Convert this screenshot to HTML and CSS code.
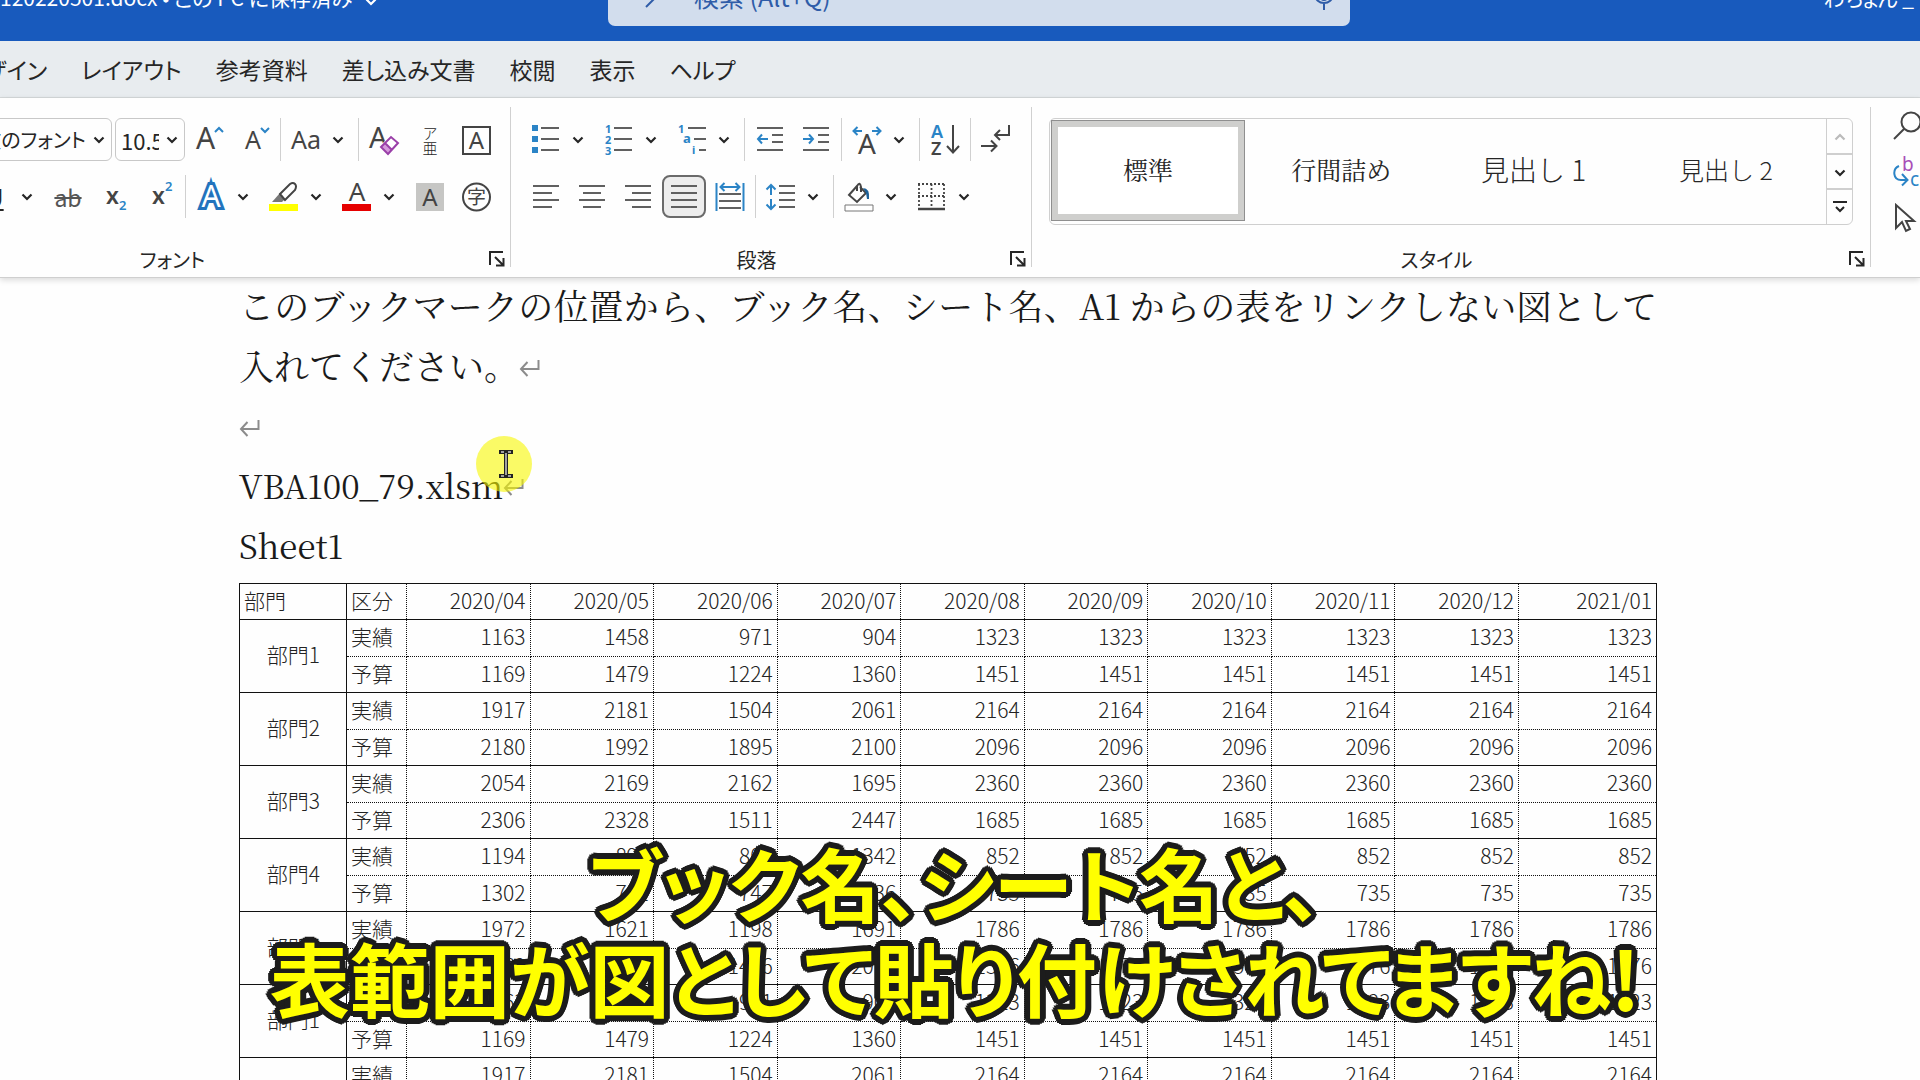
FILE: index.html
```html
<!DOCTYPE html>
<html lang="ja">
  <head>
    <meta charset="UTF-8" />
    <meta name="viewport" content="width=device-width, initial-scale=1.0" />
    <title>120220501.docx</title>
    <link rel="stylesheet" href="styles.css">
  </head>
  <body>
    <!-- shared icons -->
    <svg class="sprite" width="0" height="0" aria-hidden="true">
      <symbol id="chevron" viewBox="0 0 12 8"><path d="M1.5 1.5 6 6l4.5-4.5" fill="none" stroke="currentColor" stroke-width="2.2" /></symbol>
      <symbol id="launcher" viewBox="0 0 16 16"><path d="M1 14V1h13M6 6l8 8M14.500 7v7.500H7" fill="none" stroke="currentColor" stroke-width="2" /></symbol>
      <symbol id="return" viewBox="0 0 22 18"><path d="M19.500 1v9H2M8.500 3 2 10l6.500 7" fill="none" stroke="currentColor" stroke-width="2" /></symbol>
    </svg>

    <div class="app">
      <header class="titlebar">
        <div class="doc-name">120220501.docx • この PC に保存済み <svg class="chevron"><use href="#chevron" /></svg></div>
        <div class="search">
          <svg width="30" height="30" viewBox="0 0 30 30"><circle cx="18" cy="10" r="8" /><path d="M12 16 2 26" /></svg>
          <input type="text" aria-label="検索" placeholder="検索 (Alt+Q)" />
          <svg width="20" height="32" viewBox="0 0 20 32"><rect x="6" y="2" width="8" height="18" rx="4" /><path d="M1 14c0 12 18 12 18 0M10 23v7" /></svg>
        </div>
        <div class="user">わちょん _</div>
      </header>

      <nav class="tabs">
        <a href="#">デザイン</a>
        <a href="#">レイアウト</a>
        <a href="#">参考資料</a>
        <a href="#">差し込み文書</a>
        <a href="#">校閲</a>
        <a href="#">表示</a>
        <a href="#">ヘルプ</a>
      </nav>

      <div class="ribbon">
        <section class="group font-group">
          <div class="tools">
            <div class="row">
              <div class="combo font-name">
                <select aria-label="フォント名"><option>游明朝 (本文のフォント</option></select>
                <svg class="chevron"><use href="#chevron" /></svg>
              </div>
              <div class="combo font-size">
                <input type="text" aria-label="フォント サイズ" value="10.5" />
                <svg class="chevron"><use href="#chevron" /></svg>
              </div>
              <button class="tool" aria-label="フォントの拡大"><svg class="icon" viewBox="0 0 30 30"><text x="2" y="24" font-size="30">A</text><path class="blue" d="m21 7 4-4 4 4" /></svg></button>
              <button class="tool" aria-label="フォントの縮小"><svg class="icon" viewBox="0 0 30 30"><text x="5" y="24" font-size="25">A</text><path class="blue" d="m21 3 4 4 4-4" /></svg></button>
              <span class="sep"></span>
              <button class="tool" aria-label="文字種の変換"><svg class="icon" viewBox="0 0 30 30"><text x="0" y="24" font-size="25">Aa</text></svg></button>
              <button class="drop" aria-label="文字種の変換の一覧"><svg class="chevron"><use href="#chevron" /></svg></button>
              <span class="sep"></span>
              <button class="tool" aria-label="書式のクリア"><svg class="icon" viewBox="0 0 30 30"><text x="0" y="23" font-size="29">A</text><path d="m12 22 10-10 7 7-10 10z" fill="#fff" stroke="#fff" stroke-width="3" /><path d="m12 22 4-4 7 7-4 4z" fill="#d59bdc" /><path d="m12 22 10-10 7 6-10 11zM16 18l7 7" fill="none" stroke="#9a3fa8" stroke-width="2" /></svg></button>
              <button class="tool ruby" aria-label="ルビ"><span>ア</span><span>亜</span></button>
              <button class="tool" aria-label="囲み線"><svg class="icon" viewBox="0 0 30 30"><rect class="dark" x="2" y="2" width="27" height="27" /><text x="15.500" y="24" font-size="24" text-anchor="middle">A</text></svg></button>
            </div>
            <div class="row">
              <button class="tool underline" aria-label="下線">U</button>
              <button class="drop" aria-label="下線の一覧"><svg class="chevron"><use href="#chevron" /></svg></button>
              <button class="tool strike" aria-label="取り消し線">ab</button>
              <button class="tool" aria-label="下付き"><svg class="icon" viewBox="0 0 30 30"><text x="7" y="22" font-size="23" font-weight="600">x</text><text class="blue-text" x="20" y="28" font-size="13" font-weight="600">2</text></svg></button>
              <button class="tool" aria-label="上付き"><svg class="icon" viewBox="0 0 30 30"><text x="7" y="22" font-size="23" font-weight="600">x</text><text class="blue-text" x="20" y="9" font-size="13" font-weight="600">2</text></svg></button>
              <span class="sep"></span>
              <button class="tool" aria-label="文字の効果"><svg class="icon" viewBox="0 0 30 30"><text class="effect" x="15" y="25" font-size="30" text-anchor="middle">A</text></svg></button>
              <button class="drop" aria-label="文字の効果の一覧"><svg class="chevron"><use href="#chevron" /></svg></button>
              <button class="tool" aria-label="蛍光ペン"><svg class="icon" viewBox="0 0 30 30"><path d="M3 20 11 11l6 5-4 4z" fill="#777" /><path d="m11 12 10-10q3-2 5 0t0 6L16 18z" fill="#fff" stroke="#444" stroke-width="2" /><path d="M0 22h29v7H0z" fill="#ff0" /></svg></button>
              <button class="drop" aria-label="蛍光ペンの色"><svg class="chevron"><use href="#chevron" /></svg></button>
              <button class="tool" aria-label="フォントの色"><svg class="icon" viewBox="0 0 30 30"><text x="15" y="19" font-size="26" text-anchor="middle">A</text><path d="M0 22h29v7H0z" fill="#e60000" /></svg></button>
              <button class="drop" aria-label="フォントの色の一覧"><svg class="chevron"><use href="#chevron" /></svg></button>
              <button class="tool" aria-label="文字の網かけ"><svg class="icon" viewBox="0 0 30 30"><path d="M1 1h28v28H1z" fill="#c6c6c4" /><text x="15" y="24" font-size="24" text-anchor="middle">A</text></svg></button>
              <button class="tool" aria-label="囲い文字"><svg class="icon" viewBox="0 0 30 30"><circle class="dark" cx="15.500" cy="15" r="13.500" /><text x="15.500" y="22" font-size="19" text-anchor="middle">字</text></svg></button>
            </div>
          </div>
          <footer class="group-foot">
            <span>フォント</span>
            <button aria-label="フォントの詳細"><svg width="16" height="16"><use href="#launcher" /></svg></button>
          </footer>
        </section>

        <section class="group para-group">
          <div class="tools">
            <div class="row">
              <button class="tool" aria-label="箇条書き"><svg class="icon" viewBox="0 0 30 30"><path d="M1 0h6v6H1zM1 11h6v6H1zM1 22h6v6H1z" fill="#2b84c6" /><path class="lines" d="M10 3h18M10 14h18M10 25h18" /></svg></button>
              <button class="drop" aria-label="行頭文字"><svg class="chevron"><use href="#chevron" /></svg></button>
              <button class="tool" aria-label="段落番号"><svg class="icon" viewBox="0 0 30 30"><g class="blue-text" font-size="11" font-weight="700"><text x="1" y="8">1</text><text x="1" y="19">2</text><text x="1" y="30">3</text></g><path class="lines" d="M10 3h18M10 14h18M10 25h18" /></svg></button>
              <button class="drop" aria-label="番号の書式"><svg class="chevron"><use href="#chevron" /></svg></button>
              <button class="tool" aria-label="アウトライン"><svg class="icon" viewBox="0 0 30 30"><g class="blue-text" font-size="11" font-weight="700"><text x="1" y="8">1</text><text x="6" y="18" font-size="13">a</text><text x="15" y="29">i</text></g><path class="lines" d="M11 3h18M17 14h12M22 25h7" /></svg></button>
              <button class="drop" aria-label="アウトラインの一覧"><svg class="chevron"><use href="#chevron" /></svg></button>
              <span class="sep"></span>
              <button class="tool" aria-label="インデントを減らす"><svg class="icon" viewBox="0 0 30 30"><path class="lines" d="M2 3h26M17 10h11M17 17h11M2 25h26" /><path class="blue" d="M13 14H3M7 9.500 3 14l4 4.500" /></svg></button>
              <button class="tool" aria-label="インデントを増やす"><svg class="icon" viewBox="0 0 30 30"><path class="lines" d="M2 3h26M17 10h11M17 17h11M2 25h26" /><path class="blue" d="M2 14h10M8 9.500l4 4.500-4 4.500" /></svg></button>
              <span class="sep"></span>
              <button class="tool" aria-label="拡張書式"><svg class="icon" viewBox="0 0 30 30"><path class="blue" d="M10 6H2M5.500 2 1.500 6l4 4M20 6h8M24.500 2l4 4-4 4" /><text x="15" y="29" font-size="28" text-anchor="middle">A</text></svg></button>
              <button class="drop" aria-label="拡張書式の一覧"><svg class="chevron"><use href="#chevron" /></svg></button>
              <span class="sep"></span>
              <button class="tool" aria-label="並べ替え"><svg class="icon" viewBox="0 0 30 30"><text class="blue-text" x="1" y="13" font-size="18" font-weight="600">A</text><text x="1" y="30" font-size="18" font-weight="600">Z</text><path class="dark" d="M23 0v27M17 21l6 6.500 6-6.500" /></svg></button>
              <span class="sep"></span>
              <button class="tool" aria-label="編集記号の表示"><svg class="icon" viewBox="0 0 30 30"><path class="dark" d="M28 0v10H14M19 5l-5 5 5 5M0 21h15M10 15.500l5.500 5.500-5.500 5.500" /></svg></button>
            </div>
            <div class="row">
              <button class="tool" aria-label="左揃え"><svg class="icon" viewBox="0 0 30 30"><path class="lines" d="M2 4h26M2 11h19M2 18h26M2 25h19" /></svg></button>
              <button class="tool" aria-label="中央揃え"><svg class="icon" viewBox="0 0 30 30"><path class="lines" d="M2 4h26M6 11h18M2 18h26M6 25h18" /></svg></button>
              <button class="tool" aria-label="右揃え"><svg class="icon" viewBox="0 0 30 30"><path class="lines" d="M2 4h26M9 11h19M2 18h26M9 25h19" /></svg></button>
              <button class="tool active" aria-label="両端揃え"><svg class="icon" viewBox="0 0 30 30"><path class="lines" d="M2 4h26M2 11h26M2 18h26M2 25h26" /></svg></button>
              <button class="tool" aria-label="均等割り付け"><svg class="icon" viewBox="0 0 30 30"><path class="lines" d="M4 12h22M4 19h22M4 26h22" /><path class="blue" d="M1.500 1v28M28.500 1v28M5 5h20M9.500 1 5.500 5l4 4M20.500 1l4 4-4 4" /></svg></button>
              <span class="sep"></span>
              <button class="tool" aria-label="行と段落の間隔"><svg class="icon" viewBox="0 0 30 30"><path class="blue" d="M5 13V3M.5 7.500 5 3l4.500 4.500M5 17v10M.5 22.500 5 27l4.500-4.500" /><path class="lines" d="M13 4h16M13 11h16M13 18h16M13 25h16" /></svg></button>
              <button class="drop" aria-label="間隔の一覧"><svg class="chevron"><use href="#chevron" /></svg></button>
              <span class="sep"></span>
              <button class="tool" aria-label="塗りつぶし"><svg class="icon" viewBox="0 0 30 30"><path class="dark" d="m13 4-8 9 8 7 9-9-6-6M13 9V4q3-5 4 1v5" /><path d="M19 6q7 0 6 11h-2l-1-6z" fill="#1c6199" /><path d="M1 23h28v6H1z" fill="#fff" stroke="#777" /></svg></button>
              <button class="drop" aria-label="塗りつぶしの色"><svg class="chevron"><use href="#chevron" /></svg></button>
              <button class="tool" aria-label="罫線"><svg class="icon" viewBox="0 0 30 30"><path d="M1 2h27M1 14h27M2 2v24M14.500 2v24M27 2v24" fill="none" stroke="#444" stroke-width="1.800" stroke-dasharray="2 2" /><path d="M1 27h27" stroke="#444" stroke-width="2.500" /></svg></button>
              <button class="drop" aria-label="罫線の一覧"><svg class="chevron"><use href="#chevron" /></svg></button>
            </div>
          </div>
          <footer class="group-foot">
            <span>段落</span>
            <button aria-label="段落の設定"><svg width="16" height="16"><use href="#launcher" /></svg></button>
          </footer>
        </section>

        <section class="group style-group">
          <div class="tools">
            <div class="gallery">
              <button class="style selected">標準</button>
              <button class="style">行間詰め</button>
              <button class="style heading1">見出し 1</button>
              <button class="style heading2">見出し 2</button>
              <div class="scroll">
                <button class="disabled" aria-label="上へ"><svg class="chevron up"><use href="#chevron" /></svg></button>
                <button aria-label="下へ"><svg class="chevron"><use href="#chevron" /></svg></button>
                <button aria-label="その他"><svg width="14" height="14" viewBox="0 0 14 14"><path d="M0 2h14M3 7l4 4 4-4" fill="none" stroke="currentColor" stroke-width="2" /></svg></button>
              </div>
            </div>
          </div>
          <footer class="group-foot">
            <span>スタイル</span>
            <button aria-label="スタイルの設定"><svg width="16" height="16"><use href="#launcher" /></svg></button>
          </footer>
        </section>

        <section class="group edit-group">
          <button aria-label="検索"><svg width="30" height="30" viewBox="0 0 30 30"><circle class="dark" cx="18" cy="11" r="9.500" /><path class="dark" d="M11 18 1 28" /></svg></button>
          <button aria-label="置換"><svg width="30" height="32" viewBox="0 0 30 32"><text x="9" y="15" font-size="19" fill="#a84fb8">b</text><text x="17" y="30" font-size="19" fill="#2b84c6">c</text><path class="blue" d="M6 10c-7 3-6 14 2 14h6M9 18l5.500 6L9 29.500" /></svg></button>
          <button aria-label="選択"><svg width="30" height="30" viewBox="0 0 30 30"><path class="dark" d="M3 2v23l6-6 4 9 4-2-4-8h8z" /></svg></button>
        </section>
      </div>

      <main class="document">
        <p>このブックマークの位置から、ブック名、シート名、A1 からの表をリンクしない図として入れてください。<svg class="mark"><use href="#return" /></svg></p>
        <p><svg class="mark"><use href="#return" /></svg></p>
        <p class="latin">VBA100_79.xlsm<svg class="mark"><use href="#return" /></svg></p>
        <p class="latin">Sheet1</p>

        <table class="sheet">
          <colgroup>
            <col class="col-dept" />
            <col class="col-kind" />
            <col span="9" />
            <col class="col-last" />
          </colgroup>
          <thead>
            <tr><th>部門</th><th>区分</th><th>2020/04</th><th>2020/05</th><th>2020/06</th><th>2020/07</th><th>2020/08</th><th>2020/09</th><th>2020/10</th><th>2020/11</th><th>2020/12</th><th>2021/01</th></tr>
          </thead>
          <tbody>
            <tr><th rowspan="2">部門1</th><th>実績</th><td>1163</td><td>1458</td><td>971</td><td>904</td><td>1323</td><td>1323</td><td>1323</td><td>1323</td><td>1323</td><td>1323</td></tr>
            <tr><th>予算</th><td>1169</td><td>1479</td><td>1224</td><td>1360</td><td>1451</td><td>1451</td><td>1451</td><td>1451</td><td>1451</td><td>1451</td></tr>
          </tbody>
          <tbody>
            <tr><th rowspan="2">部門2</th><th>実績</th><td>1917</td><td>2181</td><td>1504</td><td>2061</td><td>2164</td><td>2164</td><td>2164</td><td>2164</td><td>2164</td><td>2164</td></tr>
            <tr><th>予算</th><td>2180</td><td>1992</td><td>1895</td><td>2100</td><td>2096</td><td>2096</td><td>2096</td><td>2096</td><td>2096</td><td>2096</td></tr>
          </tbody>
          <tbody>
            <tr><th rowspan="2">部門3</th><th>実績</th><td>2054</td><td>2169</td><td>2162</td><td>1695</td><td>2360</td><td>2360</td><td>2360</td><td>2360</td><td>2360</td><td>2360</td></tr>
            <tr><th>予算</th><td>2306</td><td>2328</td><td>1511</td><td>2447</td><td>1685</td><td>1685</td><td>1685</td><td>1685</td><td>1685</td><td>1685</td></tr>
          </tbody>
          <tbody>
            <tr><th rowspan="2">部門4</th><th>実績</th><td>1194</td><td>891</td><td>807</td><td>1342</td><td>852</td><td>852</td><td>852</td><td>852</td><td>852</td><td>852</td></tr>
            <tr><th>予算</th><td>1302</td><td>751</td><td>747</td><td>1336</td><td>735</td><td>735</td><td>735</td><td>735</td><td>735</td><td>735</td></tr>
          </tbody>
          <tbody>
            <tr><th rowspan="2">部門5</th><th>実績</th><td>1972</td><td>1621</td><td>1198</td><td>1691</td><td>1786</td><td>1786</td><td>1786</td><td>1786</td><td>1786</td><td>1786</td></tr>
            <tr><th>予算</th><td>1962</td><td>1662</td><td>1426</td><td>2010</td><td>1576</td><td>1576</td><td>1576</td><td>1576</td><td>1576</td><td>1576</td></tr>
          </tbody>
          <tbody>
            <tr><th rowspan="2">部門1</th><th>実績</th><td>1163</td><td>1458</td><td>971</td><td>904</td><td>1323</td><td>1323</td><td>1323</td><td>1323</td><td>1323</td><td>1323</td></tr>
            <tr><th>予算</th><td>1169</td><td>1479</td><td>1224</td><td>1360</td><td>1451</td><td>1451</td><td>1451</td><td>1451</td><td>1451</td><td>1451</td></tr>
          </tbody>
          <tbody>
            <tr><th rowspan="2">部門2</th><th>実績</th><td>1917</td><td>2181</td><td>1504</td><td>2061</td><td>2164</td><td>2164</td><td>2164</td><td>2164</td><td>2164</td><td>2164</td></tr>
            <tr><th>予算</th><td>2180</td><td>1992</td><td>1895</td><td>2100</td><td>2096</td><td>2096</td><td>2096</td><td>2096</td><td>2096</td><td>2096</td></tr>
          </tbody>
        </table>
      </main>

      <div class="pointer">
        <svg width="16" height="28" viewBox="0 0 16 28"><path d="M1 2h14M8 2v24M1 26h14" fill="none" stroke="#222" stroke-width="4" /><path d="M3 2h3M10 2h3M8 3v22M3 26h3M10 26h3" fill="none" stroke="#ccc" stroke-width="1.500" /></svg>
      </div>
      <div class="caption">ブック名、シート名と、<br>表範囲が図として貼り付けされてますね!</div>
    </div>
  </body>
</html>
```
FILE: styles.css
```css
body {
  margin: 0;
  font-family: "Noto Sans CJK JP", sans-serif;
  background-color: #fefefe;
  color: #262626;
}

button,
input,
select {
  font-family: inherit;
  color: inherit;
}

button {
  padding: 0;
  border: none;
  background: none;
}

.sprite {
  position: absolute;
}

.app {
  position: relative;
  display: flex;
  flex-direction: column;
  height: 100vh;
  overflow: hidden;
}

/* title bar: its upper part is above the window edge */
.titlebar {
  display: flex;
  flex-shrink: 0;
  margin-top: -34px;
  height: 75px;
  background-color: #185abd;
  color: #fff;
  font-size: 21px;
  line-height: 62px;
  font-feature-settings: "palt";
}

.doc-name {
  width: 608px;
  white-space: nowrap;
}

.doc-name .chevron {
  margin-left: 8px;
}

.search {
  display: flex;
  align-items: center;
  box-sizing: border-box;
  width: 742px;
  height: 60px;
  padding: 0 16px 0 36px;
  gap: 20px;
  border-radius: 7px;
  background-color: #d2dded;
}

.search svg {
  fill: none;
  stroke: #2f5ca8;
  stroke-width: 2;
}

.search input {
  flex: 1;
  min-width: 0;
  padding: 0;
  border: none;
  background: none;
  font-size: 25px;
}

.search input::placeholder {
  color: #2f5ca8;
}

.user {
  margin-left: auto;
  padding-right: 6px;
}

.tabs {
  display: flex;
  flex-shrink: 0;
  align-items: center;
  box-sizing: border-box;
  height: 57px;
  margin-left: -54px;
  padding-bottom: 1px;
  border-bottom: 1px solid #d5d9da;
  background-color: #e8ecef;
}

.tabs a {
  padding: 0 17px;
  color: #262626;
  font-size: 23px;
  font-feature-settings: "palt";
  white-space: nowrap;
  text-decoration: none;
}

/* ribbon */
.ribbon {
  position: relative;
  display: flex;
  flex-shrink: 0;
  height: 179px;
  border-bottom: 1px solid #cfcfcf;
  background-color: #fefefe;
  box-shadow: 0 2px 6px rgba(0, 0, 0, 0.15);
}

.group {
  position: relative;
  display: flex;
  flex-direction: column;
  justify-content: space-between;
  box-sizing: border-box;
  padding-top: 20px;
}

.group::after {
  content: "";
  position: absolute;
  top: 9px;
  right: 0;
  bottom: 10px;
  width: 1px;
  background-color: #d0d0d0;
}

.font-group {
  width: 647px;
  margin-left: -136px;
}

.para-group {
  width: 521px;
}

.style-group {
  flex: 1;
}

.tools {
  display: flex;
  flex-direction: column;
  gap: 14px;
  padding: 0 12px;
}

.font-group .row {
  justify-content: flex-end;
}

.row {
  display: flex;
  align-items: center;
  height: 43px;
}

.tool {
  display: flex;
  flex-shrink: 0;
  align-items: center;
  justify-content: center;
  width: 46px;
  height: 43px;
}

.drop {
  display: flex;
  flex-shrink: 0;
  align-items: center;
  width: 27px;
  height: 43px;
  padding-left: 3px;
}

.chevron {
  width: 12px;
  height: 8px;
}

.sep {
  flex-shrink: 0;
  width: 1px;
  height: 43px;
  margin: 0 2px;
  background-color: #d0d0d0;
}

.icon {
  width: 30px;
  height: 30px;
  overflow: visible;
}

.icon text,
.edit-group text {
  font-family: "Noto Sans", "Noto Sans CJK JP", sans-serif;
}

.icon text {
  fill: #444;
}

.icon .blue-text,
.icon .blue-text text {
  fill: #2b84c6;
}

.icon .effect {
  fill: #fff;
  stroke: #2273bd;
  stroke-width: 6px;
  paint-order: stroke fill;
}

.blue {
  fill: none;
  stroke: #2b84c6;
  stroke-width: 2;
}

.dark {
  fill: none;
  stroke: #444;
  stroke-width: 2;
}

.lines {
  stroke: #606060;
  stroke-width: 2;
}

.combo {
  position: relative;
  display: flex;
  align-items: center;
  flex-shrink: 0;
  box-sizing: border-box;
  height: 43px;
  margin-right: 3px;
  border: 1px solid #c8c8c8;
  border-radius: 6px;
}

.combo select,
.combo input {
  appearance: none;
  width: 100%;
  height: 100%;
  padding: 0;
  border: none;
  background: none;
  font-size: 22px;
  font-feature-settings: "palt";
}

.combo .chevron {
  position: absolute;
  right: 6px;
  pointer-events: none;
}

.font-name {
  width: 247px;
}

.combo select {
  padding-right: 25px;
  font-size: 20px;
  text-align: right;
  text-align-last: right;
}

.font-size {
  width: 70px;
  margin-right: 1px;
  padding: 0 25px 0 5px;
}

.ruby {
  flex-direction: column;
  font-size: 15px;
  font-weight: 300;
  line-height: 15px;
}

.underline {
  font-size: 24px;
  text-decoration: underline;
}

.strike {
  color: #555;
  font-size: 23px;
  text-decoration: line-through;
}

.active {
  box-sizing: border-box;
  width: 44px;
  margin: 0 1px;
  border: 2px solid #6a6a6a;
  border-radius: 8px;
  background-color: #ededed;
}

.group-foot {
  display: flex;
  align-items: center;
  height: 36px;
  font-size: 20px;
  font-feature-settings: "palt";
}

.group-foot span {
  flex: 1;
  text-align: center;
}

.group-foot button {
  width: 30px;
  height: 16px;
}

.group-foot svg {
  display: block;
  margin-left: 8px;
}

/* style gallery */
.style-group .tools {
  padding: 0 18px 0 17px;
}

.gallery {
  display: flex;
  box-sizing: border-box;
  height: 107px;
  padding-left: 1px;
  border: 1px solid #cfcfcf;
  border-radius: 6px;
}

.style {
  flex: 1;
  margin: 1px 0 3px;
  padding-bottom: 4px;
  font-family: "Noto Serif CJK JP", "Noto Sans CJK JP", serif;
  font-size: 25px;
}

.selected {
  border: 1px solid #8f8f8f;
  background-color: #fff;
  box-shadow: inset 0 0 0 6px #cfcfcd;
}

.heading1,
.heading2 {
  font-family: "Noto Sans CJK JP", sans-serif;
  font-weight: 300;
}

.heading1 {
  font-size: 28px;
}

.scroll {
  display: flex;
  flex-direction: column;
  width: 25px;
  margin-left: 4px;
  border-left: 1px solid #cfcfcf;
}

.scroll button {
  flex: 1;
  line-height: 1;
}

.scroll button + button {
  border-top: 2px solid #cfcfcf;
}

.up {
  transform: rotate(180deg);
}

.disabled {
  color: #bbb;
}

.edit-group {
  width: 49px;
  padding: 12px 0 0 22px;
  gap: 14px;
  justify-content: flex-start;
}

.edit-group button {
  height: 32px;
}

.edit-group svg {
  display: block;
}

.edit-group::after {
  display: none;
}

/* document, scrolled a little under the ribbon */
.document {
  margin-top: -3px;
  padding: 0 263px 0 239px;
}

.document p {
  margin: 0;
  color: #1a1a1a;
  font-family: "Noto Serif CJK JP", "Noto Sans CJK JP", "Liberation Serif", serif;
  font-size: 35px;
  line-height: 60px;
  text-align: justify;
}

.document .latin {
  font-size: 33px;
}

.mark {
  width: 22px;
  height: 18px;
  color: #8c8c8c;
  vertical-align: 3px;
}

.sheet {
  width: 100%;
  margin-top: 8px;
  border: 1px solid #111;
  border-collapse: collapse;
  table-layout: fixed;
  color: #222;
  font-size: 21px;
  line-height: 24px;
}

.col-dept {
  width: 107px;
}

.col-kind {
  width: 60px;
}

.col-last {
  width: 138px;
}

.sheet th,
.sheet td {
  box-sizing: border-box;
  height: 36px;
  padding: 0 4px 4px;
  border: 1px dotted #111;
  font-weight: 300;
  text-align: right;
}

.sheet thead th {
  border-top: 1px solid #111;
  border-bottom: 1px solid #111;
}

.sheet tbody tr:first-child > * {
  height: 37px;
  border-top: 1px solid #111;
}

.sheet th:first-child,
.sheet thead th:nth-child(2) {
  text-align: left;
}

.sheet tbody th {
  text-align: left;
}

.sheet thead th:first-child,
.sheet th[rowspan] {
  border-right: 1px solid #111;
  border-left: 1px solid #111;
}

.sheet tbody th[rowspan] {
  padding-right: 26px;
  text-align: right;
}

.sheet td:last-child,
.sheet th:last-child:not(:first-child) {
  border-right: 1px solid #111;
}

/* mouse highlight */
.pointer {
  position: absolute;
  top: 436px;
  left: 476px;
  display: flex;
  align-items: center;
  justify-content: center;
  box-sizing: border-box;
  width: 56px;
  height: 56px;
  padding-left: 4px;
  border-radius: 50%;
  background-color: rgba(246, 246, 0, 0.6);
}

/* subtitle over the video, the shadows make a round outline */
.caption {
  position: absolute;
  top: 834px;
  left: 0;
  right: 10px;
  color: #ff0;
  font-size: 80px;
  font-weight: 700;
  font-feature-settings: "palt";
  line-height: 95px;
  text-align: center;
  white-space: nowrap;
  text-shadow:
    6px 0 #1c1c1c, -6px 0 #1c1c1c, 0 6px #1c1c1c, 0 -6px #1c1c1c,
    4px 4px #1c1c1c, -4px 4px #1c1c1c, 4px -4px #1c1c1c, -4px -4px #1c1c1c,
    5px 2px #1c1c1c, -5px 2px #1c1c1c, 5px -2px #1c1c1c, -5px -2px #1c1c1c,
    2px 5px #1c1c1c, -2px 5px #1c1c1c, 2px -5px #1c1c1c, -2px -5px #1c1c1c,
    3px 0 #1c1c1c, -3px 0 #1c1c1c, 0 3px #1c1c1c, 0 -3px #1c1c1c;
}
```
